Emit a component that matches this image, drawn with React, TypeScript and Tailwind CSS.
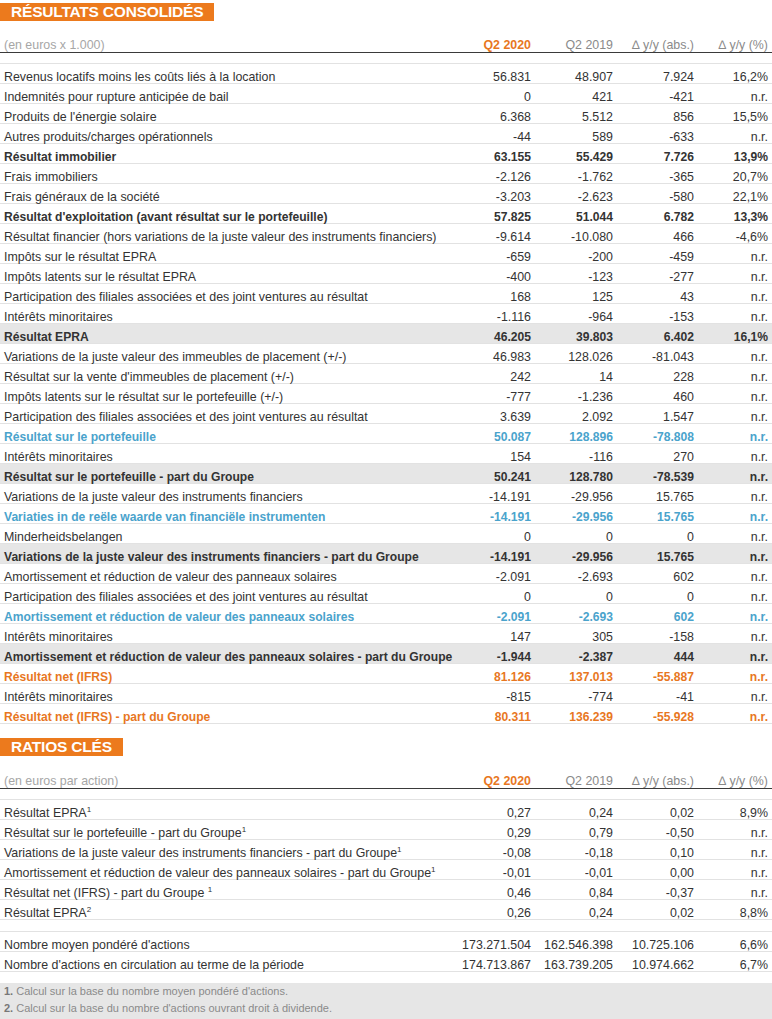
import React from "react";

type Kind = "n" | "b" | "g" | "blue" | "orange";

interface Row {
  label: string;
  sup?: string;
  values: [string, string, string, string];
  kind?: Kind;
}

const results: Row[] = [
  { label: "Revenus locatifs moins les coûts liés à la location", values: ["56.831", "48.907", "7.924", "16,2%"] },
  { label: "Indemnités pour rupture anticipée de bail", values: ["0", "421", "-421", "n.r."] },
  { label: "Produits de l'énergie solaire", values: ["6.368", "5.512", "856", "15,5%"] },
  { label: "Autres produits/charges opérationnels", values: ["-44", "589", "-633", "n.r."] },
  { label: "Résultat immobilier", values: ["63.155", "55.429", "7.726", "13,9%"], kind: "b" },
  { label: "Frais immobiliers", values: ["-2.126", "-1.762", "-365", "20,7%"] },
  { label: "Frais généraux de la société", values: ["-3.203", "-2.623", "-580", "22,1%"] },
  { label: "Résultat d'exploitation (avant résultat sur le portefeuille)", values: ["57.825", "51.044", "6.782", "13,3%"], kind: "b" },
  { label: "Résultat financier (hors variations de la juste valeur des instruments financiers)", values: ["-9.614", "-10.080", "466", "-4,6%"] },
  { label: "Impôts sur le résultat EPRA", values: ["-659", "-200", "-459", "n.r."] },
  { label: "Impôts latents sur le résultat EPRA", values: ["-400", "-123", "-277", "n.r."] },
  { label: "Participation des filiales associées et des joint ventures au résultat", values: ["168", "125", "43", "n.r."] },
  { label: "Intérêts minoritaires", values: ["-1.116", "-964", "-153", "n.r."] },
  { label: "Résultat EPRA", values: ["46.205", "39.803", "6.402", "16,1%"], kind: "g" },
  { label: "Variations de la juste valeur des immeubles de placement (+/-)", values: ["46.983", "128.026", "-81.043", "n.r."] },
  { label: "Résultat sur la vente d'immeubles de placement (+/-)", values: ["242", "14", "228", "n.r."] },
  { label: "Impôts latents sur le résultat sur le portefeuille (+/-)", values: ["-777", "-1.236", "460", "n.r."] },
  { label: "Participation des filiales associées et des joint ventures au résultat", values: ["3.639", "2.092", "1.547", "n.r."] },
  { label: "Résultat sur le portefeuille", values: ["50.087", "128.896", "-78.808", "n.r."], kind: "blue" },
  { label: "Intérêts minoritaires", values: ["154", "-116", "270", "n.r."] },
  { label: "Résultat sur le portefeuille - part du Groupe", values: ["50.241", "128.780", "-78.539", "n.r."], kind: "g" },
  { label: "Variations de la juste valeur des instruments financiers", values: ["-14.191", "-29.956", "15.765", "n.r."] },
  { label: "Variaties in de reële waarde van financiële instrumenten", values: ["-14.191", "-29.956", "15.765", "n.r."], kind: "blue" },
  { label: "Minderheidsbelangen", values: ["0", "0", "0", "n.r."] },
  { label: "Variations de la juste valeur des instruments financiers - part du Groupe", values: ["-14.191", "-29.956", "15.765", "n.r."], kind: "g" },
  { label: "Amortissement et réduction de valeur des panneaux solaires", values: ["-2.091", "-2.693", "602", "n.r."] },
  { label: "Participation des filiales associées et des joint ventures au résultat", values: ["0", "0", "0", "n.r."] },
  { label: "Amortissement et réduction de valeur des panneaux solaires", values: ["-2.091", "-2.693", "602", "n.r."], kind: "blue" },
  { label: "Intérêts minoritaires", values: ["147", "305", "-158", "n.r."] },
  { label: "Amortissement et réduction de valeur des panneaux solaires - part du Groupe", values: ["-1.944", "-2.387", "444", "n.r."], kind: "g" },
  { label: "Résultat net (IFRS)", values: ["81.126", "137.013", "-55.887", "n.r."], kind: "orange" },
  { label: "Intérêts minoritaires", values: ["-815", "-774", "-41", "n.r."] },
  { label: "Résultat net (IFRS) - part du Groupe", values: ["80.311", "136.239", "-55.928", "n.r."], kind: "orange" },
];

const ratios: Row[] = [
  { label: "Résultat EPRA", sup: "1", values: ["0,27", "0,24", "0,02", "8,9%"] },
  { label: "Résultat sur le portefeuille - part du Groupe", sup: "1", values: ["0,29", "0,79", "-0,50", "n.r."] },
  { label: "Variations de la juste valeur des instruments financiers - part du Groupe", sup: "1", values: ["-0,08", "-0,18", "0,10", "n.r."] },
  { label: "Amortissement et réduction de valeur des panneaux solaires - part du Groupe", sup: "1", values: ["-0,01", "-0,01", "0,00", "n.r."] },
  { label: "Résultat net (IFRS) - part du Groupe ", sup: "1", values: ["0,46", "0,84", "-0,37", "n.r."] },
  { label: "Résultat EPRA", sup: "2", values: ["0,26", "0,24", "0,02", "8,8%"] },
];

const shares: Row[] = [
  { label: "Nombre moyen pondéré d'actions", values: ["173.271.504", "162.546.398", "10.725.106", "6,6%"] },
  { label: "Nombre d'actions en circulation au terme de la période", values: ["174.713.867", "163.739.205", "10.974.662", "6,7%"] },
];

const grid = "grid grid-cols-[451px_80px_82px_81px_78px]";

// couleurs et graisse par type de ligne
const kindClass: Record<Kind, string> = {
  n: "text-[#333333]",
  b: "font-bold text-[12.1px] text-[#333333]",
  g: "font-bold text-[12.1px] text-[#333333] bg-[#e6e6e6]",
  blue: "font-bold text-[12.1px] text-[#4aa3cc]",
  orange: "font-bold text-[12.1px] text-[#e8771f]",
};

function SectionTitle({ title }: { title: string }) {
  return (
    <div className="h-[18px] flex">
      <div className="bg-[#ec7a1d] text-white font-bold text-[15.5px] leading-[18px] px-[11px] tracking-[-0.2px]">
        {title}
      </div>
    </div>
  );
}

function HeadRow({ caption }: { caption: string }) {
  return (
    <div className={`${grid} h-[21px] border-b border-[#3a3a3a] items-center pt-[4px] text-[#a6a6a6]`}>
      <div className="pl-[4px]">{caption}</div>
      <div className="text-right font-bold text-[#e8771f]">Q2 2020</div>
      <div className="text-right text-[#8a8a8a]">Q2 2019</div>
      <div className="text-right text-[#8a8a8a]">∆ y/y (abs.)</div>
      <div className="text-right pr-[4px] text-[#8a8a8a]">∆ y/y (%)</div>
    </div>
  );
}

function Spacer({ h = "h-[11px]" }: { h?: string }) {
  return <div className={`${h} border-b border-[#e2e2e2]`} />;
}

function DataRow({ row }: { row: Row }) {
  const k = kindClass[row.kind ?? "n"];
  return (
    <div className={`${grid} h-[20px] border-b border-[#e2e2e2] items-center pt-[4px] ${k}`}>
      <div className="pl-[4px] whitespace-nowrap">
        {row.label}
        {row.sup && <sup className="text-[8px] -top-[5px]">{row.sup}</sup>}
      </div>
      <div className="text-right">{row.values[0]}</div>
      <div className="text-right">{row.values[1]}</div>
      <div className="text-right">{row.values[2]}</div>
      <div className="text-right pr-[4px]">{row.values[3]}</div>
    </div>
  );
}

export default function App() {
  return (
    <div className="w-[772px] bg-white text-[12.4px] text-[#333333] font-['Liberation_Sans',Arial,sans-serif]">
      <div className="pt-[3px]">
        <SectionTitle title="RÉSULTATS CONSOLIDÉS" />
      </div>
      <div className="mt-[11px]">
        <HeadRow caption="(en euros x 1.000)" />
        <Spacer />
        {results.map((r, i) => (
          <DataRow key={i} row={r} />
        ))}
      </div>

      <div className="mt-[14px]">
        <SectionTitle title="RATIOS CLÉS" />
      </div>
      <div className="mt-[12px]">
        <HeadRow caption="(en euros par action)" />
        <Spacer />
        {ratios.map((r, i) => (
          <DataRow key={i} row={r} />
        ))}
        <Spacer h="h-[12px]" />
        {shares.map((r, i) => (
          <DataRow key={i} row={r} />
        ))}
      </div>

      <div className="mt-[11px] bg-[#e6e6e6] text-[11px] leading-[17px] text-[#8a8a8a] pl-[4px] pb-[4px]">
        <div>
          <span className="font-bold text-[#777777]">1.</span> Calcul sur la base du nombre moyen pondéré d'actions.
        </div>
        <div>
          <span className="font-bold text-[#777777]">2.</span> Calcul sur la base du nombre d'actions ouvrant droit à dividende.
        </div>
      </div>
    </div>
  );
}
